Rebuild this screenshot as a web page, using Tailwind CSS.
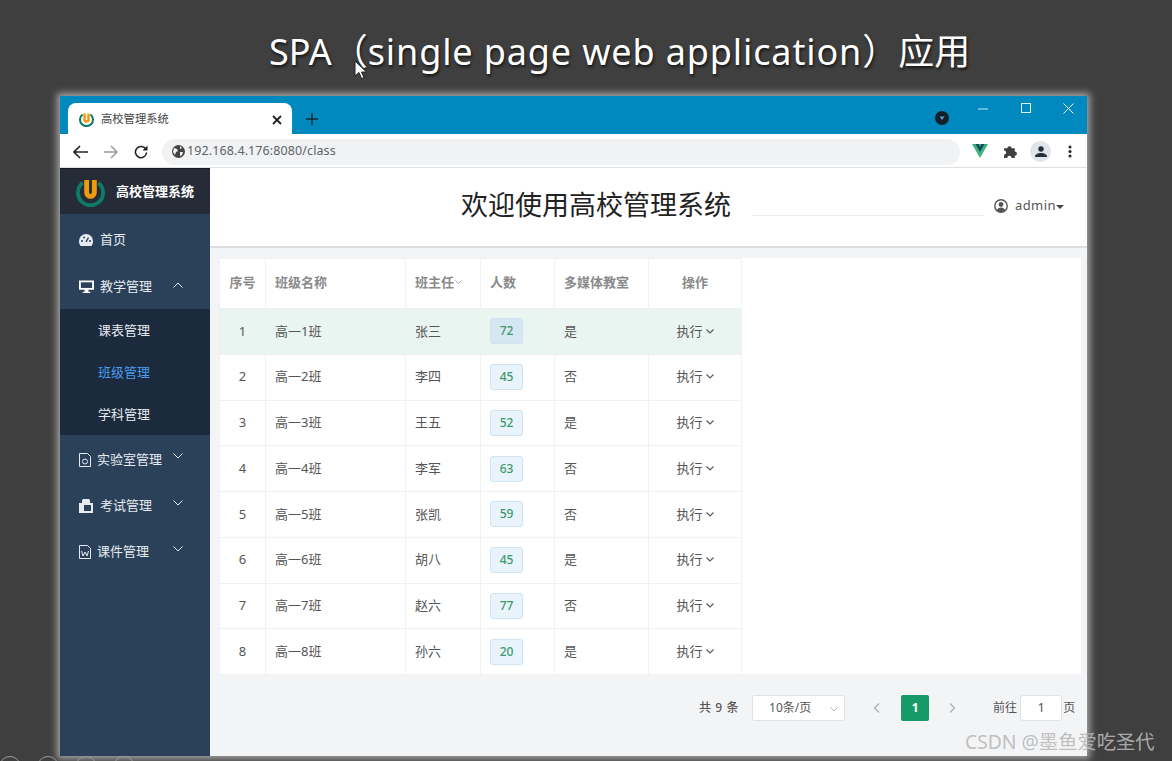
<!DOCTYPE html>
<html lang="zh">
<head>
<meta charset="UTF-8">
<title>SPA 应用</title>
<script src="https://cdn.jsdelivr.net/npm/@tailwindcss/browser@4"></script>
</head>
<body class="relative w-[1172px] h-[761px] overflow-hidden bg-[#3f3f3f] font-['Noto_Sans','Noto_Sans_CJK_SC',sans-serif]">

<!-- slide title -->
<div class="h-[96px] pt-[26px] pl-[269px] text-[36px] leading-[52px] text-white whitespace-nowrap [text-shadow:1px_2px_3px_rgba(0,0,0,0.7)]">SPA（<span class="tracking-[0.87px]">single page web application</span>）应用</div>
<svg class="absolute left-[354px] top-[60px]" width="14" height="20" viewBox="0 0 14 20"><path d="M1 1v15l4-3.500 2.500 6 2.500-1-2.500-5.500h5z" fill="#fff" stroke="#222" stroke-width="1"/></svg>

<!-- browser window -->
<div class="ml-[60px] w-[1027px] h-[660px] flex flex-col shadow-[0_0_7px_3px_rgba(175,175,175,0.9)]">
  <!-- tab strip -->
  <div class="h-[38px] shrink-0 bg-[#0089bf] flex items-end pl-[8px] relative">
    <div class="w-[224px] h-[31px] bg-white rounded-t-[8px] flex items-center pl-[11px] pr-[10px] pt-[2px]">
      <svg width="15" height="15" viewBox="0 0 30 30"><path d="M7 5a13 13 0 1 0 16 0" fill="none" stroke="#0f7a68" stroke-width="4"/><path d="M11 3v12a4 4 0 0 0 8 0V3" fill="none" stroke="#f09a0c" stroke-width="5"/></svg>
      <span class="ml-[7px] text-[11.300px] text-[#444]">高校管理系统</span>
      <svg class="ml-auto" width="10" height="10" viewBox="0 0 10 10"><path d="M1 1l8 8M9 1l-8 8" stroke="#222" stroke-width="1.800"/></svg>
    </div>
    <svg class="ml-[14px] mb-[9px]" width="12" height="12" viewBox="0 0 12 12"><path d="M6 0v12M0 6h12" stroke="#1a2a33" stroke-width="1.500"/></svg>
    <svg class="absolute left-[875px] top-[15px]" width="14" height="14" viewBox="0 0 14 14"><circle cx="7" cy="7" r="7" fill="#13202c"/><path d="M4.500 5.500h5L7 9z" fill="#4fa8cf"/></svg>
    <svg class="absolute left-[918px] top-[12px]" width="10" height="2" viewBox="0 0 10 2"><path d="M0 1h10" stroke="#cfe8f3" stroke-width="1"/></svg>
    <svg class="absolute left-[961px] top-[7px]" width="10" height="10" viewBox="0 0 10 10"><rect x=".5" y=".5" width="9" height="9" fill="none" stroke="#e4f2f8" stroke-width="1"/></svg>
    <svg class="absolute left-[1003px] top-[7px]" width="11" height="11" viewBox="0 0 11 11"><path d="M.5.500l10 10M10.500.500l-10 10" stroke="#f0f8fb" stroke-width="1"/></svg>
  </div>
  <!-- toolbar -->
  <div class="h-[34px] shrink-0 bg-white border-b border-[#dcdfe3] flex items-center pl-[13px] pt-[2px] relative">
    <svg width="15" height="14" viewBox="0 0 15 14"><path d="M15 7H1.500M7 1L1 7l6 6" fill="none" stroke="#222" stroke-width="1.600"/></svg>
    <svg class="ml-[16px]" width="14" height="14" viewBox="0 0 14 14"><path d="M0 7h12.500M7 1l6 6-6 6" fill="none" stroke="#999" stroke-width="1.500"/></svg>
    <svg class="ml-[16px]" width="14" height="14" viewBox="0 0 14 14"><path d="M12 4.500A5.600 5.600 0 1 0 12.600 7.500" fill="none" stroke="#222" stroke-width="1.600"/><path d="M13.500 .5v5h-5z" fill="#222"/></svg>
    <div class="ml-[14px] w-[798px] h-[26px] rounded-full bg-[#f0f2f3] flex items-center pl-[10px]">
      <svg width="13" height="13" viewBox="0 0 13 13"><circle cx="6.500" cy="6.500" r="6.500" fill="#444"/><path d="M2 3l3 1 1 2-2 1-1 3-2-3zM8 1l2 2-2 1zM8 7l3 0-1 3-2 1z" fill="#f0f2f3"/></svg>
      <span class="ml-[2px] text-[12.500px] text-[#5f6368] tracking-[0.1px]">192.168.4.176:8080/class</span>
    </div>
    <svg class="absolute left-[912px] top-[10px]" width="16" height="14" viewBox="0 0 16 14"><path d="M0 0h16L8 14z" fill="#3fb27f"/><path d="M3.500 0h3L8 3l1.500-3h3L8 8z" fill="#14495a"/></svg>
    <svg class="absolute left-[943px] top-[10px]" width="15" height="15" viewBox="0 0 14 14"><path d="M1 4h3a2 2 0 0 1 4 0h3v3a2 2 0 0 1 0 4v2H8a2 2 0 0 0-4 0H1v-3a2 2 0 0 0 0-4z" fill="#3c4043"/></svg>
    <div class="absolute left-[970px] top-[7px] w-[21px] h-[21px] rounded-full bg-[#e3e4ea] flex items-center justify-center">
      <svg width="12" height="12" viewBox="0 0 12 12"><circle cx="6" cy="3" r="2.700" fill="#222f3c"/><path d="M0 11c0-3 3-4 6-4s6 1 6 4z" fill="#222f3c"/></svg>
    </div>
    <svg class="absolute left-[1008px] top-[11px]" width="4" height="13" viewBox="0 0 4 13"><circle cx="2" cy="2" r="1.500" fill="#222"/><circle cx="2" cy="6.500" r="1.500" fill="#222"/><circle cx="2" cy="11" r="1.500" fill="#222"/></svg>
  </div>

  <!-- page -->
  <div class="flex-1 flex min-h-0">
    <!-- sidebar -->
    <aside class="w-[150px] shrink-0 bg-[#2b4059] text-[13px] text-[#e6ebf0] flex flex-col">
      <div class="h-[46px] bg-[#252c38] border-t border-[#14181f] flex items-center pl-[16px] pt-[1px]">
        <svg width="29" height="29" viewBox="0 0 30 30"><path d="M7 5a13 13 0 1 0 16 0" fill="none" stroke="#0f7a68" stroke-width="4"/><path d="M11 2v13a4 4 0 0 0 8 0V2" fill="none" stroke="#f09a0c" stroke-width="5"/></svg>
        <span class="ml-[11px] font-bold text-white">高校管理系统</span>
      </div>
      <div class="h-[49px] flex items-center pl-[19px] pt-[2px]">
        <svg width="14" height="12" viewBox="0 0 14 12"><path d="M7 0a7 7 0 0 0-7 7c0 2 .5 3.500 1.500 5h11c1-1.500 1.500-3 1.500-5a7 7 0 0 0-7-7z" fill="#e6ebf0"/><path d="M7 8l2.500-4.500" stroke="#2b4059" stroke-width="1.500"/><circle cx="3" cy="7" r="1" fill="#2b4059"/><circle cx="11" cy="7" r="1" fill="#2b4059"/><circle cx="5" cy="3.500" r="1" fill="#2b4059"/></svg>
        <span class="ml-[7px]">首页</span>
      </div>
      <div class="h-[46px] flex items-center pl-[19px] pt-[2px] relative">
        <svg width="15" height="14" viewBox="0 0 16 14"><path d="M0 0h16v10H10v2h2v1.500H4V12h2v-2H0z" fill="#fff"/><rect x="2" y="2" width="12" height="6" fill="#2b4059"/></svg>
        <span class="ml-[6px]">教学管理</span>
        <svg class="absolute left-[113px] top-[19px]" width="10" height="6" viewBox="0 0 10 6"><path d="M.5 5.500L5 1l4.500 4.500" fill="none" stroke="#e6ebf0" stroke-width="1"/></svg>
      </div>
      <div class="h-[126px] bg-[#1b2a3c] flex flex-col pl-[38px]">
        <div class="h-[42px] flex items-center pt-[2px]">课表管理</div>
        <div class="h-[42px] flex items-center pt-[2px] text-[#4a9df0]">班级管理</div>
        <div class="h-[42px] flex items-center pt-[2px]">学科管理</div>
      </div>
      <div class="h-[47px] flex items-center pl-[19px] pt-[2px] relative">
        <svg width="12" height="14" viewBox="0 0 12 14"><path d="M.5.500h8l3 3v10H.5z" fill="none" stroke="#e6ebf0"/><circle cx="6" cy="8.500" r="2.500" fill="none" stroke="#e6ebf0"/></svg>
        <span class="ml-[6px]">实验室管理</span>
        <svg class="absolute left-[113px] top-[18px]" width="10" height="6" viewBox="0 0 10 6"><path d="M.5.500L5 5l4.500-4.500" fill="none" stroke="#e6ebf0" stroke-width="1"/></svg>
      </div>
      <div class="h-[46px] flex items-center pl-[19px] pt-[2px] relative">
        <svg width="14" height="14" viewBox="0 0 14 14"><path d="M0 4h3V1.500A1.500 1.500 0 0 1 4.500 0h5A1.500 1.500 0 0 1 11 1.500V4h3v10H0z" fill="#e6ebf0"/><rect x="5" y="6" width="7" height="6" fill="#2b4059"/></svg>
        <span class="ml-[7px]">考试管理</span>
        <svg class="absolute left-[113px] top-[18px]" width="10" height="6" viewBox="0 0 10 6"><path d="M.5.500L5 5l4.500-4.500" fill="none" stroke="#e6ebf0" stroke-width="1"/></svg>
      </div>
      <div class="h-[46px] flex items-center pl-[19px] pt-[2px] relative">
        <svg width="12" height="14" viewBox="0 0 12 14"><path d="M.5.500h8l3 3v10H.5z" fill="none" stroke="#e6ebf0"/><path d="M2.500 6l1.500 5 2-4 2 4 1.500-5" fill="none" stroke="#e6ebf0"/></svg>
        <span class="ml-[6px]">课件管理</span>
        <svg class="absolute left-[113px] top-[18px]" width="10" height="6" viewBox="0 0 10 6"><path d="M.5.500L5 5l4.500-4.500" fill="none" stroke="#e6ebf0" stroke-width="1"/></svg>
      </div>
    </aside>

    <!-- main -->
    <main class="flex-1 bg-[#f3f4f6] flex flex-col">
      <header class="h-[80px] shrink-0 bg-white border-b-2 border-[#dcdde0] relative flex items-center pl-[251px] pb-[2px]">
        <h1 class="text-[27px] text-[#222] font-normal leading-[40px] -mt-[2px]">欢迎使用高校管理系统</h1>
        <div class="absolute left-[542px] top-[47px] w-[232px] h-px bg-[#eceef0]"></div>
        <div class="absolute left-[784px] top-[28px] flex items-center text-[13px] text-[#555]">
          <svg width="14" height="14" viewBox="0 0 14 14"><circle cx="7" cy="7" r="6.200" fill="none" stroke="#555" stroke-width="1.400"/><circle cx="7" cy="5.500" r="2.400" fill="#555"/><path d="M2.800 11.500c.6-2.200 2.300-3 4.200-3s3.600.8 4.200 3a6 6 0 0 1-8.400 0z" fill="#555"/></svg>
          <span class="ml-[7px] tracking-[0.4px]">admin</span>
          <svg class="mt-[3px]" width="8" height="4" viewBox="0 0 8 4"><path d="M0 0h8L4 4z" fill="#444"/></svg>
        </div>
      </header>

      <div class="mt-[10px] ml-[10px] w-[861px] h-[416px] bg-white shrink-0">
        <table class="table-fixed -ml-px w-[522px] border-collapse text-[13px] text-[#555]">
          <thead>
            <tr class="h-[50px] text-[#8a8a8a] font-bold">
              <th class="w-[46px] border border-[#f0f1f3] font-bold pb-[2px]">序号</th>
              <th class="w-[140px] border border-[#f0f1f3] text-left pl-[9px] font-bold pb-[2px]">班级名称</th>
              <th class="w-[75px] border border-[#f0f1f3] text-left pl-[9px] font-bold pb-[2px]">班主任<svg class="inline ml-[1px] mb-[2px]" width="7" height="4" viewBox="0 0 7 4"><path d="M.5.500L3.500 3.500l3-3" fill="none" stroke="#aaa"/></svg></th>
              <th class="w-[74px] border border-[#f0f1f3] text-left pl-[9px] font-bold pb-[2px]">人数</th>
              <th class="w-[94px] border border-[#f0f1f3] text-left pl-[9px] font-bold pb-[2px]">多媒体教室</th>
              <th class="w-[93px] border border-[#f0f1f3] font-bold pb-[2px]">操作</th>
            </tr>
          </thead>
          <tbody id="rows"></tbody>
        </table>
      </div>

      <!-- pagination -->
      <div class="flex items-center h-[28px] mt-[20px] pl-[489px] text-[12px] text-[#555]">
        <span class="font-medium tracking-[0.6px]">共 9 条</span>
        <div class="ml-[13px] w-[93px] h-[26px] bg-white border border-[#dfe2e6] rounded-[3px] flex items-center pl-[16px] relative">10条/页
          <svg class="absolute right-[6px] top-[11px]" width="8" height="5" viewBox="0 0 8 5"><path d="M.5.500L4 4l3.500-3.500" fill="none" stroke="#b5b8bd"/></svg>
        </div>
        <svg class="ml-[28px]" width="7" height="10" viewBox="0 0 7 10"><path d="M6 .5L1.500 5 6 9.500" fill="none" stroke="#aaadb2" stroke-width="1.200"/></svg>
        <div class="ml-[21px] w-[28px] h-[26px] rounded-[2px] bg-[#169b68] text-white font-bold flex items-center justify-center">1</div>
        <svg class="ml-[20px]" width="7" height="10" viewBox="0 0 7 10"><path d="M1 .5L5.500 5 1 9.500" fill="none" stroke="#aaadb2" stroke-width="1.200"/></svg>
        <span class="ml-[37px]">前往</span>
        <div class="ml-[3px] w-[42px] h-[26px] bg-white border border-[#dfe2e6] rounded-[3px] flex items-center justify-center text-[13px]">1</div>
        <span class="ml-[1px]">页</span>
      </div>
    </main>
  </div>
</div>

<!-- slide footer circles -->
<div class="absolute left-[-1px] top-[756px] flex gap-[16px]">
  <div class="w-[22px] h-[22px] rounded-full border border-[#999]"></div>
  <div class="w-[22px] h-[22px] rounded-full border border-[#999]"></div>
  <div class="w-[22px] h-[22px] rounded-full border border-[#999]"></div>
  <div class="w-[22px] h-[22px] rounded-full border border-[#999]"></div>
</div>

<!-- watermark -->
<div class="absolute left-[965px] top-[728px] text-[19.300px] leading-[28px] text-[#b8b8b8]/90 whitespace-nowrap">CSDN @墨鱼爱吃圣代</div>

<script>
  const classes = [
    ['高一1班', '张三', 72, '是'],
    ['高一2班', '李四', 45, '否'],
    ['高一3班', '王五', 52, '是'],
    ['高一4班', '李军', 63, '否'],
    ['高一5班', '张凯', 59, '否'],
    ['高一6班', '胡八', 45, '是'],
    ['高一7班', '赵六', 77, '否'],
    ['高一8班', '孙六', 20, '是'],
  ];
  document.getElementById('rows').innerHTML = classes.map((c, i) => {
    const first = i === 0;
    return `<tr class="h-[45.75px] ${first ? 'bg-[#e9f5f1]' : ''}">
      <td class="border border-[#f0f1f3] text-center">${i + 1}</td>
      <td class="border border-[#f0f1f3] pl-[9px]">${c[0]}</td>
      <td class="border border-[#f0f1f3] pl-[9px]">${c[1]}</td>
      <td class="border border-[#f0f1f3] pl-[9px]"><span class="w-[33px] h-[26px] flex items-center justify-center rounded-[3px] border border-[#cfe3f2] text-[12px] font-medium text-[#3d9a6b] ${first ? 'bg-[#d5e8f1]' : 'bg-[#e8f3fc]'}">${c[2]}</span></td>
      <td class="border border-[#f0f1f3] pl-[9px]">${c[3]}</td>
      <td class="border border-[#f0f1f3] text-center">执行<svg class="inline ml-[3px] mb-[2px]" width="8" height="5" viewBox="0 0 8 5"><path d="M.5.500L4 4l3.500-3.500" fill="none" stroke="#555" stroke-width="1.100"/></svg></td>
    </tr>`;
  }).join('');
</script>
</body>
</html>
